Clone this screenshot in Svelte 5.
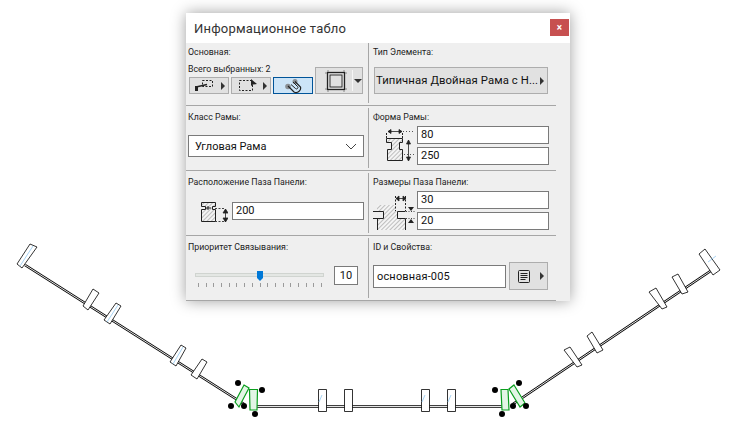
<script>
  const stubs = [
    "30,244 37,247 22,268 17,264", "93,289 99,293 88,310 83,306", "116,303 121,306 110,324 104,320",
    "181,345 186,348 176,366 170,362", "202,359 207,362 197,379 191,375",
    "705,249 720,270 713,275 699,254", "678,274 688,292 682,294 672,277", "656,288 667,307 662,309 649,292",
    "592,332 603,350 597,353 587,336", "570,347 582,365 577,367 564,350",
    "318.5,389.5 326.5,389.5 326.5,411.5 318.5,411.5", "344.5,389.5 352.5,389.5 352.5,411.5 344.5,411.5",
    "421.5,389.5 429.5,389.5 429.5,411.5 421.5,411.5", "447.5,389.5 455.5,389.5 455.5,411.5 447.5,411.5"
  ];
  const greens = [
    "244,385 249,388 239,407 235,402", "249.5,389.5 257.5,389.5 257,410 250,410",
    "501,389.5 508,389.5 509,410 502,410", "514,385 525,403 520,407 509,389"
  ];
  const dots = [
    [238,383],[262,390],[231,406],[244,406],[255,414],
    [495,390],[519,383],[513,406],[526,406],[502,414]
  ];
  const ticks = Array.from({ length: 17 });
</script>

<div class="desktop">
  <svg class="canvas" width="744" height="438" viewBox="0 0 744 438">
    <g fill="none" stroke="#000" stroke-width="2.6">
      <path d="M25 265 L244 404" />
      <path d="M250 406.5 H505" />
      <path d="M712 270 L513 404" />
    </g>
    <g fill="none" stroke="#fff" stroke-width="0.9">
      <path d="M25 265 L244 404" />
      <path d="M250 406.5 H505" />
      <path d="M712 270 L513 404" />
    </g>
    {#each stubs as p}
      <polygon points={p} fill="#fff" stroke="#000" stroke-width="0.8" />
    {/each}
    <g stroke="#a8d4f4" stroke-width="1" fill="none">
      <path d="M33 246 L20 266" />
      <path d="M118 305 L107 322" />
      <path d="M183 347 L173 364" />
      <path d="M708 262 L716 256" />
      <path d="M322 395 L319 402" />
      <path d="M425 395 L422 402" />
      <path d="M451 395 L448 402" />
    </g>
    {#each greens as p}
      <polygon points={p} fill="#e3f5e6" stroke="#0a9e1e" stroke-width="1.2" />
    {/each}
    {#each dots as d}
      <circle cx={d[0]} cy={d[1]} r="3" fill="#000" />
    {/each}
  </svg>

  <section class="window">
    <header class="titlebar">
      <span class="title">Информационное табло</span>
      <button class="close">×</button>
    </header>

    <div class="body">
      <div class="row first">
        <div class="cell">
          <div class="label">Основная:</div>
          <div class="sel">
            <div>
              <div class="label sub">Всего выбранных: 2</div>
              <div class="tools">
                <button class="tool">
                  <svg width="24" height="14" viewBox="0 0 24 14">
                    <rect x="8.5" y="1.5" width="10" height="6" fill="none" stroke="#222" stroke-dasharray="2 1.5" />
                    <path d="M2 8 L13 5.5" stroke="#222" stroke-width="1.6" fill="none" />
                    <rect x="1" y="7" width="3" height="5" fill="#222" />
                  </svg>
                  <i class="arrow"></i>
                </button>
                <button class="tool">
                  <svg width="24" height="14" viewBox="0 0 24 14">
                    <rect x="3.5" y="1.5" width="13" height="10" fill="none" stroke="#222" stroke-dasharray="2 1.5" />
                    <path d="M15 0 V7 L17 5.5 L21 5 Z" fill="#222" />
                  </svg>
                  <i class="arrow"></i>
                </button>
                <button class="tool active" aria-label="Магнит">
                  <svg width="22" height="16" viewBox="0 0 22 16">
                    <circle cx="6" cy="8.5" r="2.8" fill="#8a8f94" />
                    <circle cx="13" cy="3.5" r="2.5" fill="#8a8f94" />
                    <path d="M6 8 L12 14 A4.5 4.5 0 0 0 18.5 9 L13 3.5" fill="none" stroke="#222" stroke-width="1.2" />
                    <path d="M9 6.5 L13.5 10.5 A1.4 1.4 0 0 0 15.5 8.5 L11 4" fill="none" stroke="#222" stroke-width="1" />
                  </svg>
                </button>
              </div>
            </div>
            <button class="big" aria-label="Рама">
              <svg width="22" height="22" viewBox="0 0 22 22" fill="none" stroke="#222">
                <rect x="2.5" y="2.5" width="17" height="17" stroke-width="1.3" />
                <rect x="5" y="5" width="12" height="12" stroke-width="0.9" />
                <path d="M0 3 H2 M20 3 H22 M0 19 H2 M20 19 H22 M3 0 V2 M19 0 V2 M3 20 V22 M19 20 V22" stroke="#888" />
              </svg>
              <span class="sep"></span>
              <i class="down"></i>
            </button>
          </div>
        </div>
        <div class="cell right">
          <div class="label">Тип Элемента:</div>
          <button class="type">
            <span>Типичная Двойная Рама с Н...</span>
            <i class="arrow"></i>
          </button>
        </div>
      </div>

      <div class="row">
        <div class="cell">
          <div class="label">Класс Рамы:</div>
          <div class="select">
            <span>Угловая Рама</span>
            <svg width="12" height="7" viewBox="0 0 12 7">
              <path d="M1 1 L6 6 L11 1" fill="none" stroke="#444" />
            </svg>
          </div>
        </div>
        <div class="cell right">
          <div class="label">Форма Рамы:</div>
          <div class="pair">
            <svg class="icon" width="44" height="39" viewBox="0 0 44 39">
              <defs>
                <pattern id="hatch" width="3" height="3" patternUnits="userSpaceOnUse" patternTransform="rotate(-45)">
                  <rect width="3" height="3" fill="#f4f4f4" />
                  <path d="M0 0 H3" stroke="#888" />
                </pattern>
              </defs>
              <path d="M13.5 12.5 H29.5 V16.5 H26.5 V23.5 H29.5 V34.5 H14.5 V23.5 H18.5 V16.5 H13.5 Z" fill="url(#hatch)" stroke="#222" />
              <path d="M13.5 12 V6 M29.5 12 V6" stroke="#222" stroke-dasharray="2 1" />
              <path d="M15 5.5 H29 M15 5.5 L18 3.5 V7.5 Z M29 5.5 L26 3.5 V7.5 Z" stroke="#222" fill="#222" stroke-width="0.8" />
              <path d="M30 5.5 H41 M31 28.5 H41" stroke="#555" stroke-dasharray="1 2" />
              <path d="M35.5 14 V34 M35.5 14 L33.5 18 H37.5 Z M35.5 35 L33.5 31 H37.5 Z" stroke="#222" fill="#222" stroke-width="0.8" />
            </svg>
            <div class="fields">
              <div class="input">80</div>
              <div class="input">250</div>
            </div>
          </div>
        </div>
      </div>

      <div class="row">
        <div class="cell">
          <div class="label">Расположение Паза Панели:</div>
          <div class="single">
            <svg class="icon-mid" width="28" height="24" viewBox="0 0 28 24">
              <path d="M1.5 0.5 H15.5 V4.5 H12.5 V7.5 H15.5 V19.5 H1.5 V7.5 H5.5 V4.5 H1.5 Z" fill="url(#hatch)" stroke="#222" />
              <path d="M5 6 H11 M8 4 V8" stroke="#222" />
              <path d="M15 6.5 H25 M15 19.5 H25" stroke="#444" stroke-dasharray="2 1.5" />
              <path d="M25.5 7 V20 M25.5 7 L23 11 H28 Z M25.5 20 L23 16 H28 Z" stroke="#222" fill="#222" stroke-width="0.8" />
            </svg>
            <div class="input wide">200</div>
          </div>
        </div>
        <div class="cell right">
          <div class="label">Размеры Паза Панели:</div>
          <div class="pair">
            <svg class="icon" width="44" height="39" viewBox="0 0 44 39">
              <path d="M4 14 H22 V20 H24 V27 H32 V39 H4 V27 H10 V20 H4 Z" fill="url(#hatch)" />
              <path d="M0 20.5 H10.5 V27.5 H0 M4.5 27.5 V39 M32.5 39 V27.5 H24.5 V20.5 H32.5" fill="none" stroke="#222" />
              <path d="M23 7.5 H33 M23 7.5 L26 5 V10 Z M33 7.5 L30 5 V10 Z" stroke="#222" fill="#222" stroke-width="0.8" />
              <path d="M22.5 5 V20 M32.5 5 V20" stroke="#222" stroke-dasharray="2 1.5" />
              <path d="M33 20.5 H42 M33 27.5 H42" stroke="#444" stroke-dasharray="1 1.5" />
              <path d="M38 20 L35 16 H41 Z M38 28 L35 32 H41 Z" fill="#222" />
            </svg>
            <div class="fields">
              <div class="input">30</div>
              <div class="input">20</div>
            </div>
          </div>
        </div>
      </div>

      <div class="row">
        <div class="cell">
          <div class="label">Приоритет Связывания:</div>
          <div class="slider-row">
            <div class="slider">
              <div class="track"><span class="thumb"></span></div>
              <div class="ticks">
                {#each ticks as _}<span></span>{/each}
              </div>
            </div>
            <div class="value">10</div>
          </div>
        </div>
        <div class="cell right">
          <div class="label">ID и Свойства:</div>
          <div class="id-row">
            <div class="input id">основная-005</div>
            <button class="props" aria-label="Свойства">
              <svg width="14" height="15" viewBox="0 0 14 15" fill="none" stroke="#222">
                <rect x="1.5" y="1.5" width="11" height="12" rx="1" />
                <path d="M3.5 4.5 H10.5 M3.5 6.5 H10.5 M3.5 8.5 H10.5 M3.5 10.5 H8.5" />
              </svg>
              <i class="arrow"></i>
            </button>
          </div>
        </div>
      </div>
    </div>
  </section>
</div>

<style>
  :global(body) {
    margin: 0;
    background: #fff;
  }
  .desktop {
    position: relative;
    width: 744px;
    height: 438px;
    overflow: hidden;
    font-family: Roboto, "Noto Sans", sans-serif;
    color: #111;
  }
  .canvas {
    position: absolute;
    inset: 0;
  }
  .window {
    position: absolute;
    left: 186px;
    top: 13px;
    width: 384px;
    height: 288px;
    background: #efefef;
    box-shadow: 0 0 14px rgba(0, 0, 0, 0.38);
  }
  .titlebar {
    height: 30px;
    background: #fff;
    display: flex;
    align-items: center;
    justify-content: space-between;
    padding: 0 1px 0 8px;
    box-sizing: border-box;
  }
  .title {
    font-size: 13px;
    color: #333;
    letter-spacing: 0.2px;
  }
  .close {
    width: 19px;
    height: 17px;
    margin-top: -1px;
    border: 0;
    padding: 0;
    background: #c75050;
    color: #fff;
    font: bold 10px/17px Roboto, sans-serif;
  }
  .body {
    width: 370px;
  }
  .row {
    box-sizing: border-box;
    height: 65px;
    display: grid;
    grid-template-columns: 182px 188px;
    border-bottom: 1px solid #a6a6a6;
  }
  .row.first {
    height: 63px;
  }
  .cell {
    box-sizing: border-box;
    padding: 5px 0 0 2px;
    min-width: 0;
  }
  .first .cell {
    padding-top: 3px;
  }
  .cell.right {
    border-left: 1px solid #a6a6a6;
    padding-left: 4px;
    margin: 2px 0 2px;
    padding-top: 3px;
  }
  .first .cell.right {
    margin-top: 0;
  }
  .label {
    font-size: 8.8px;
    line-height: 12px;
    white-space: nowrap;
    color: #1c1c1c;
  }
  button {
    font-family: inherit;
    cursor: default;
  }
  button svg {
    flex: none;
  }
  .sel {
    display: flex;
    align-items: flex-end;
    gap: 2px;
  }
  .sub {
    margin-top: 5px;
  }
  .tools {
    display: flex;
    gap: 2px;
    margin: 2px 0 0 1px;
  }
  .tool {
    box-sizing: border-box;
    width: 40px;
    height: 17px;
    padding: 0 3px 0 4px;
    display: flex;
    align-items: center;
    justify-content: space-between;
    background: #e1e1e1;
    border: 1px solid #adadad;
  }
  .tool.active {
    background: #cce4f7;
    border-color: #005499;
    justify-content: center;
    padding: 0;
  }
  .arrow {
    flex: none;
    width: 0;
    height: 0;
    border-left: 4px solid #333;
    border-top: 4px solid transparent;
    border-bottom: 4px solid transparent;
  }
  .big {
    box-sizing: border-box;
    width: 48px;
    height: 27px;
    padding: 0 0 0 9px;
    display: flex;
    align-items: center;
    background: #e1e1e1;
    border: 1px solid #adadad;
  }
  .sep {
    flex: none;
    width: 1px;
    height: 21px;
    background: #f6f6f6;
    margin: 0 1px 0 5px;
  }
  .down {
    flex: none;
    width: 0;
    height: 0;
    border-top: 4px solid #333;
    border-left: 4px solid transparent;
    border-right: 4px solid transparent;
  }
  .type {
    box-sizing: border-box;
    width: 174px;
    height: 27px;
    margin: 9px 0 0 1px;
    padding: 0 3px 0 1px;
    display: flex;
    align-items: center;
    justify-content: space-between;
    background: #e1e1e1;
    border: 1px solid #adadad;
    font-size: 11.3px;
    letter-spacing: 0.1px;
    color: #111;
    white-space: nowrap;
  }
  .select {
    box-sizing: border-box;
    width: 176px;
    height: 22px;
    margin-top: 12px;
    padding: 0 6px;
    display: flex;
    align-items: center;
    justify-content: space-between;
    background: #fff;
    border: 1px solid #7a7a7a;
    font-size: 11px;
  }
  .pair {
    display: flex;
    margin-top: 3px;
  }
  .icon {
    flex: none;
  }
  .fields {
    display: flex;
    flex-direction: column;
    gap: 3px;
  }
  .input {
    box-sizing: border-box;
    width: 132px;
    height: 18px;
    padding: 0 3px;
    background: #fff;
    border: 1px solid #7a7a7a;
    font-size: 11px;
    line-height: 16px;
  }
  .single {
    display: flex;
    align-items: flex-start;
    margin: 14px 0 0 12px;
    gap: 4px;
  }
  .icon-mid {
    flex: none;
  }
  .slider-row {
    display: flex;
    align-items: flex-start;
    margin: 13px 0 0 7px;
  }
  .slider {
    width: 129px;
    padding-top: 7px;
  }
  .track {
    position: relative;
    box-sizing: border-box;
    height: 4px;
    background: #e4e7e4;
    border: 1px solid #d0d4d0;
  }
  .thumb {
    position: absolute;
    left: 61px;
    top: -3px;
    width: 6px;
    height: 10px;
    background: #0078d7;
    clip-path: polygon(0 0, 100% 0, 100% 70%, 50% 100%, 0 70%);
  }
  .ticks {
    display: flex;
    justify-content: space-between;
    padding: 0 2px 0 3px;
    margin-top: 6px;
  }
  .ticks span {
    width: 1px;
    height: 4px;
    background: #9a9a9a;
  }
  .value {
    box-sizing: border-box;
    width: 24px;
    height: 19px;
    margin-left: 10px;
    background: #fff;
    border: 1px solid #7a7a7a;
    font-size: 11px;
    line-height: 17px;
    text-align: center;
  }
  .id-row {
    display: flex;
    align-items: center;
    gap: 3px;
    margin-top: 9px;
  }
  .input.id {
    width: 133px;
    height: 23px;
    line-height: 21px;
    letter-spacing: 0.17px;
  }
  .props {
    box-sizing: border-box;
    width: 39px;
    height: 28px;
    padding: 0 3px 0 7px;
    display: flex;
    align-items: center;
    justify-content: space-between;
    background: #e1e1e1;
    border: 1px solid #adadad;
  }
</style>
